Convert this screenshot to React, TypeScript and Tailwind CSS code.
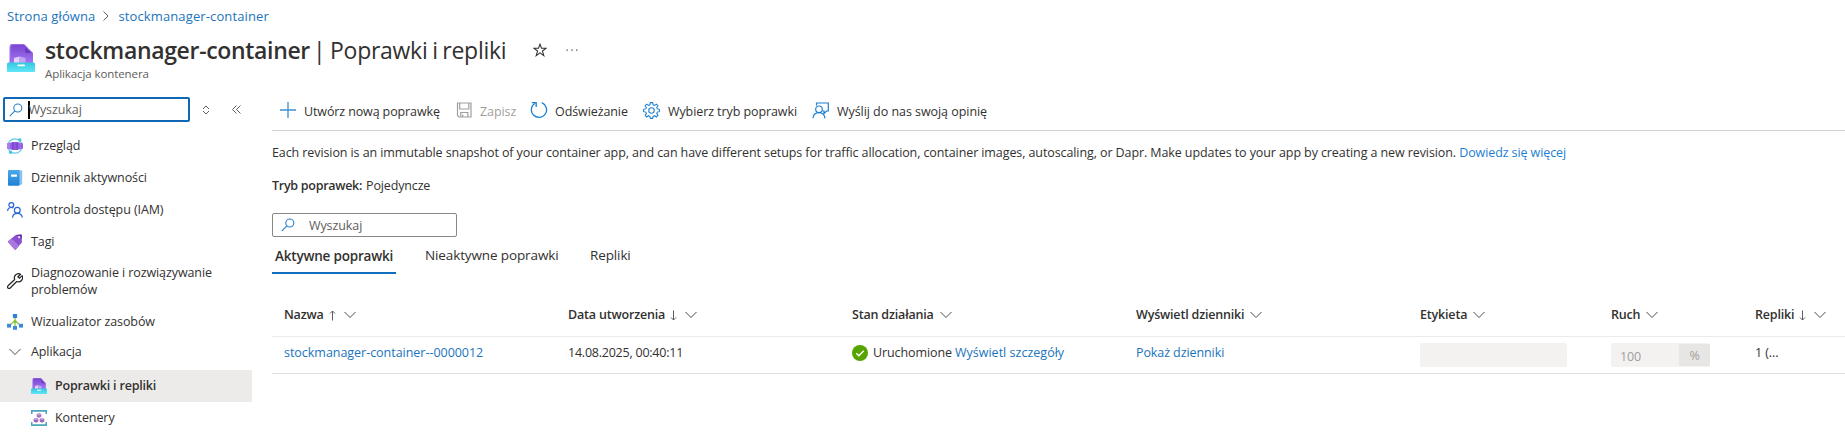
import React from 'react';

type IconProps = { className?: string };

const Chevron = ({ className = '' }: IconProps) => (
  <svg className={`shrink-0 ${className}`} width="12" height="8" viewBox="0 0 12 8" fill="none" stroke="#4b4a48" strokeWidth="1">
    <path d="M.5 1 6 6.5 11.5 1" />
  </svg>
);

const Arrow = ({ up }: { up?: boolean }) => (
  <svg className="shrink-0" width="7" height="11" viewBox="0 0 7 11" fill="none" stroke="#605e5c" strokeWidth="1">
    <path d={up ? 'M3.500 10.500V1M1 3.500 3.500 1 6 3.500' : 'M3.500.5V10M1 7.500 3.500 10 6 7.500'} />
  </svg>
);

const SearchIcon = () => (
  <svg className="shrink-0" width="14" height="14" viewBox="0 0 14 14" fill="none" stroke="#2b80c9" strokeWidth="1.1">
    <circle cx="8.8" cy="5" r="4" />
    <path d="M5.9 7.9.7 13.1" />
  </svg>
);

const RevisionIcon = ({ className = '' }: IconProps) => (
  <svg className={`shrink-0 ${className}`} viewBox="0 0 28 28">
    <defs>
      <linearGradient id="doc" x1="0" y1="0" x2="0" y2="1">
        <stop offset="0" stopColor="#7a45d2" />
        <stop offset="1" stopColor="#a67af4" />
      </linearGradient>
      <linearGradient id="tray" x1="0" y1="0" x2="0" y2="1">
        <stop offset="0" stopColor="#35c8de" />
        <stop offset="1" stopColor="#5fe6f7" />
      </linearGradient>
    </defs>
    <path d="M3 1.500Q3 0 4.500 0H17L21 4V20H2.500V3Z" fill="#9a6cec" />
    <path d="M6 1H17.500L26 9V20H4V3Q4 1 6 1Z" fill="url(#doc)" />
    <path d="M18 3V7.500Q18 9 19.500 9H24.500Z" fill="#6a3cbc" />
    <path d="M17.800 1.200 26 9.300" stroke="#b08cf2" strokeWidth=".8" />
    <path d="M7 14 12.500 12.500V19.500H7Z" fill="#e2d2fb" />
    <path d="M12.500 12.500 18.500 14V19.500H12.500Z" fill="#c3a5f4" />
    <path d="M1.500 18.500H26.500Q28 18.500 28 20V27Q28 28 27 28H1Q0 28 0 27V20Q0 18.500 1.500 18.500Z" fill="url(#tray)" />
    <rect x="10.500" y="20.500" width="7.500" height="1.800" rx=".9" fill="#fff" />
  </svg>
);

const OverviewIcon = () => (
  <svg width="16" height="16" viewBox="0 0 16 16">
    <circle cx="8" cy="8" r="7.200" fill="none" stroke="#5cc8e8" strokeWidth="1.200" />
    <path d="M0 5.500 5 4.200H11L16 5.500V10.500L11 11.800H5L0 10.500Z" fill="#9560e4" />
    <path d="M5 4.200H11V11.800H5Z" fill="#7f4bd2" />
    <path d="M0 5.500 3 4.700V11.300L0 10.500Z" fill="#ac7df0" />
    <path d="M8 4.200V11.800M13 4.700V11.300" stroke="#a57aec" strokeWidth=".6" />
    <circle cx="12.800" cy="2" r="1.700" fill="#45c5e5" />
    <circle cx="3.600" cy="14.200" r="1.700" fill="#45c5e5" />
  </svg>
);

const LogIcon = () => (
  <svg width="16" height="16" viewBox="0 0 16 16">
    <defs>
      <linearGradient id="book" x1="0" y1="0" x2="0" y2="1">
        <stop offset="0" stopColor="#4aa8ea" />
        <stop offset="1" stopColor="#1f80d6" />
      </linearGradient>
    </defs>
    <rect x="2" y=".3" width="13.200" height="14.500" rx="1" fill="#8cc3ee" />
    <path d="M2 0H12.500V15.700H2Q1 15.700 1 14.700V1Q1 0 2 0Z" fill="url(#book)" />
    <rect x="4" y="4.500" width="6" height="2.200" rx=".4" fill="#fff" />
  </svg>
);

const PeopleIcon = () => (
  <svg width="16" height="16" viewBox="0 0 16 16" fill="none" stroke="#2465d8" strokeWidth="1.200">
    <circle cx="4.300" cy="3" r="2.400" />
    <path d="M.6 9C.8 6.700 2.300 5.500 4.300 5.500 5.100 5.500 5.900 5.700 6.500 6.100" />
    <circle cx="10.300" cy="8.300" r="2.900" />
    <path d="M5.500 15.700C5.700 13 7.500 11.300 10.300 11.300S15 13 15.400 15.700" />
  </svg>
);

const TagIcon = () => (
  <svg width="16" height="16" viewBox="0 0 16 16">
    <path d="M1.400 7 8.700 1 13.800.5Q15 .5 15 1.700L14.800 8.400 8.800 15.400Q8.200 15.900 7.600 15.400L1.400 8.600Q.8 7.700 1.400 7Z" fill="#8a50cf" />
    <path d="M1.400 7 4.500 4.500 12 11.700 8.800 15.400Q8.200 15.900 7.600 15.400L1.400 8.600Q.8 7.700 1.400 7Z" fill="#a878dc" />
    <path d="M8.700 1 13.800.5Q15 .5 15 1.700L14.900 4 9 .9Z" fill="#6a34ad" />
    <circle cx="12.100" cy="3.200" r="1.100" fill="#f0e4fb" />
  </svg>
);

const WrenchIcon = () => (
  <svg width="16" height="16" viewBox="0 0 16 16" fill="none" stroke="#262524" strokeWidth="1.200" strokeLinejoin="round">
    <path d="M13.600 1.200A4.200 4.200 0 0 0 7.700 6.500L1 12.800A1.500 1.500 0 0 0 3.200 15L9.700 8.500A4.200 4.200 0 0 0 15.100 2.700L12.600 5.200 10.900 3.700Z" />
  </svg>
);

const VisualizerIcon = () => (
  <svg width="16" height="16" viewBox="0 0 16 16">
    <path d="M8 4V13M8 6.500 2.500 11.500M8 6.500 13.500 11.500" stroke="#8cc63f" strokeWidth="1.300" fill="none" />
    <circle cx="8" cy="7.500" r="1.600" fill="#86c440" />
    <rect x="5.900" y="0" width="4.200" height="4" fill="#2f7fd2" />
    <rect x="0" y="9.800" width="4" height="3.800" fill="#3c8ade" />
    <rect x="12" y="9.800" width="4" height="3.800" fill="#3c8ade" />
    <rect x="6" y="12" width="4" height="3.800" fill="#3c8ade" />
  </svg>
);

const ContainersIcon = () => (
  <svg width="16" height="16" viewBox="0 0 16 16">
    <path d="M0 0H16V4H14.500V1.800H1.500V4H0ZM0 16H16V12H14.500V14.200H1.500V12H0Z" fill="#4ba6bd" />
    <path d="M8 3 10.300 4.200V6.800L8 8 5.700 6.800V4.200Z" fill="#a86fc0" />
    <path d="M5 7.800 7.300 9V11.600L5 12.800 2.700 11.600V9Z" fill="#9a62ba" />
    <path d="M11 7.800 13.300 9V11.600L11 12.800 8.700 11.600V9Z" fill="#9a62ba" />
    <path d="M8 3 10.300 4.200 8 5.400 5.700 4.200ZM5 7.800 7.300 9 5 10.200 2.700 9ZM11 7.800 13.300 9 11 10.200 8.700 9Z" fill="#c9a0da" />
  </svg>
);

const SaveIcon = () => (
  <svg width="16" height="16" viewBox="0 0 16 16" fill="none" stroke="#a19f9d" strokeWidth="1.200">
    <path d="M1.500 1H15V15H3L1.500 13.500Z" />
    <path d="M3.700 1V7H12.800V1M4.700 15V10.500H11.800V15M6.700 12.500V15" />
  </svg>
);

const RefreshIcon = () => (
  <svg width="18" height="18" viewBox="0 0 18 18" fill="none" stroke="#1d7fd0" strokeWidth="1.300">
    <path d="M11.700 1.700A7.600 7.600 0 1 1 5 2.300" />
    <path d="M1.800 1.700H6.200V6" />
  </svg>
);

const GEAR =
  'M6.900.6H9.100L9.500 2.600 10.900 3.200 12.600 2 14.100 3.500 12.900 5.200 13.500 6.500 15.400 6.900V9.100L13.500 9.500 12.900 10.900 14.100 12.500 12.600 14.100 10.900 12.900 9.500 13.500 9.100 15.400H6.900L6.500 13.500 5.200 12.900 3.500 14.100 2 12.500 3.200 10.900 2.600 9.500.6 9.100V6.900L2.600 6.500 3.200 5.200 2 3.500 3.500 2 5.200 3.200 6.500 2.600Z';

const GearIcon = () => (
  <svg width="17" height="17" viewBox="0 0 16 16" fill="none" stroke="#1d7fd0" strokeWidth="1">
    <path d={GEAR} />
    <circle cx="8" cy="8" r="2.600" />
  </svg>
);

const FeedbackIcon = () => (
  <svg width="17" height="17" viewBox="0 0 17 17" fill="none" stroke="#1d7fd0" strokeWidth="1.200">
    <path d="M4.500 3.500V1H16.300V9H14.500L12 11.500V9H11" />
    <circle cx="7" cy="7.300" r="3.300" />
    <path d="M1 16.300C1.300 12.800 3.800 10.700 7 10.700S12.500 12.800 13 16.300" />
  </svg>
);

const PlusIcon = () => (
  <svg width="16" height="16" viewBox="0 0 16 16" fill="none" stroke="#3b8fd0" strokeWidth="1.300">
    <path d="M8 0V16M0 8H16" />
  </svg>
);

const navItems = [
  { label: 'Przegląd', icon: <OverviewIcon /> },
  { label: 'Dziennik aktywności', icon: <LogIcon /> },
  { label: 'Kontrola dostępu (IAM)', icon: <PeopleIcon /> },
  { label: 'Tagi', icon: <TagIcon /> },
];

function Sidebar() {
  return (
    <nav className="flex w-[252px] shrink-0 flex-col">
      <div className="flex h-[25px] items-center">
        <div className="ml-[3px] flex h-[25px] w-[187px] items-center rounded-[2px] border-2 border-[#1068b4] pl-1">
          <SearchIcon />
          <span className="ml-[5px] h-[18px] w-[1.500px] bg-black" />
          <span className="-ml-px text-[#605e5c]">Wyszukaj</span>
        </div>
        <svg className="ml-[12px]" width="8" height="10" viewBox="0 0 8 10" fill="none" stroke="#605e5c">
          <path d="M1 4 4 1 7 4M1 6 4 9 7 6" />
        </svg>
        <svg className="ml-[22px]" width="9" height="9" viewBox="0 0 9 9" fill="none" stroke="#605e5c">
          <path d="M4.500.5.500 4.500 4.500 8.500M8.500.5 4.500 4.500 8.500 8.500" />
        </svg>
      </div>
      <ul className="mt-[8px]">
        {navItems.map((item) => (
          <li key={item.label} className="flex h-8 items-center gap-2 pl-[7px]">
            {item.icon}
            <span>{item.label}</span>
          </li>
        ))}
        <li className="flex h-12 items-center gap-2 pb-[2px] pl-[7px] leading-[17px]">
          <WrenchIcon />
          <span className="w-[200px]">Diagnozowanie i rozwiązywanie problemów</span>
        </li>
        <li className="flex h-8 items-center gap-2 pl-[7px]">
          <VisualizerIcon />
          <span>Wizualizator zasobów</span>
        </li>
        <li className="flex h-8 items-center gap-2.5 pb-[4px] pl-[9px]">
          <Chevron />
          <span>Aplikacja</span>
        </li>
        <li className="flex h-8 items-center gap-2 bg-[#edebe9] pl-[31px]">
          <RevisionIcon className="size-4" />
          <span className="font-semibold tracking-[-0.190px]">Poprawki i repliki</span>
        </li>
        <li className="flex h-8 items-center gap-2 pl-[31px]">
          <ContainersIcon />
          <span>Kontenery</span>
        </li>
      </ul>
    </nav>
  );
}

function Toolbar() {
  return (
    <div className="flex h-[34px] items-start border-b border-[#d2d0ce] pl-2 pt-[4px]">
      <div className="flex h-[18px] w-[176px] items-center gap-2">
        <PlusIcon />
        <span className="whitespace-nowrap pt-[4px] tracking-[-0.120px]">Utwórz nową poprawkę</span>
      </div>
      <div className="flex h-[18px] w-[74px] items-center gap-2 text-[#a19f9d]">
        <SaveIcon />
        <span className="pt-[4px]">Zapisz</span>
      </div>
      <div className="flex h-[18px] w-[113px] items-center gap-[7px]">
        <RefreshIcon />
        <span className="pt-[4px]">Odświeżanie</span>
      </div>
      <div className="flex h-[18px] w-[169px] items-center gap-2">
        <GearIcon />
        <span className="whitespace-nowrap pt-[4px]">Wybierz tryb poprawki</span>
      </div>
      <div className="flex h-[18px] items-center gap-2">
        <FeedbackIcon />
        <span className="whitespace-nowrap pt-[4px] tracking-[-0.050px]">Wyślij do nas swoją opinię</span>
      </div>
    </div>
  );
}

const columns: { label: string; sort?: 'up' | 'down' }[] = [
  { label: 'Nazwa', sort: 'up' },
  { label: 'Data utworzenia', sort: 'down' },
  { label: 'Stan działania' },
  { label: 'Wyświetl dzienniki' },
  { label: 'Etykieta' },
  { label: 'Ruch' },
  { label: 'Repliki', sort: 'down' },
];

const GRID = 'grid grid-cols-[284px_284px_284px_284px_191px_144px_90px] pl-3';

function RevisionsTable() {
  return (
    <div className="mt-[18px]">
      <div className={`${GRID} h-[45px] items-center border-b border-[#edebe9] pt-[2px]`}>
        {columns.map((c) => (
          <div key={c.label} className="flex items-center">
            <span className="font-semibold tracking-[-0.180px]">{c.label}</span>
            {c.sort && (
              <span className="ml-[5px]">
                <Arrow up={c.sort === 'up'} />
              </span>
            )}
            <Chevron className={c.sort ? 'ml-[8px]' : 'ml-[6px]'} />
          </div>
        ))}
      </div>
      <div className={`${GRID} h-[37px] border-b border-[#e1dfdd] leading-[18px]`}>
        <span className="pt-[7px] tracking-[-0.030px] text-[#1a74bd]">stockmanager-container--0000012</span>
        <span className="pt-[7px] tracking-[-0.230px]">14.08.2025, 00:40:11</span>
        <div className="flex items-start pt-[7px]">
          <svg className="mt-[1px] shrink-0" width="16" height="16" viewBox="0 0 16 16">
            <circle cx="8" cy="8" r="8" fill="#57a300" />
            <path d="m4.300 8.200 2.500 2.500 5-5" fill="none" stroke="#fff" strokeWidth="1.500" />
          </svg>
          <span className="ml-[5px] tracking-[-0.100px]">Uruchomione</span>
          <span className="ml-[3px] tracking-[0.020px] text-[#1a74bd]">Wyświetl szczegóły</span>
        </div>
        <span className="pt-[7px] text-[#1a74bd]">Pokaż dzienniki</span>
        <div className="mt-[6px] h-6 w-[147px] rounded-[2px] bg-[#f3f2f1]" />
        <div className="mt-[6px] flex h-6 w-[99px] items-center justify-between rounded-[2px] bg-[#f3f2f1] pl-[9px] text-[#a19f9d]">
          <span className="pt-[3px] tracking-[-0.200px]">100</span>
          <span className="flex h-[22px] w-[31px] items-center justify-center bg-[#e8e6e4] pt-px">%</span>
        </div>
        <span className="pt-[7px]">1 (...</span>
      </div>
    </div>
  );
}

export default function App() {
  return (
    <div className="h-[433px] overflow-hidden bg-white font-['Open_Sans','Noto_Sans',sans-serif] text-[12.500px] leading-[18px] tracking-[-0.090px] text-[#323130]">
      <div className="flex h-8 items-center pl-[7px] text-[13px] tracking-[0.120px] text-[#1a74bd]">
        <span>Strona główna</span>
        <svg className="ml-[8px] mr-[9px]" width="6" height="10" viewBox="0 0 6 10" fill="none" stroke="#605e5c">
          <path d="M.5.5 5 5 .5 9.500" />
        </svg>
        <span>stockmanager-container</span>
      </div>
      <header className="flex h-[65px] pl-[7px]">
        <RevisionIcon className="mt-[12px] size-7" />
        <div className="ml-[10px]">
          <div className="flex h-[34px] items-center whitespace-nowrap pt-px text-[23px]">
            <h1 className="w-[268px] whitespace-nowrap">
              <span className="font-semibold tracking-[-0.330px]">stockmanager-container</span>
            </h1>
            <span className="w-[196px] tracking-[-0.280px] [word-spacing:-1px]">| Poprawki i repliki</span>
            <svg className="ml-[24px]" width="14" height="14" viewBox="0 0 14 14" fill="none" stroke="#323130" strokeWidth="1.050">
              <path d="M7 1.200 8.500 5.300H13L9.400 8 10.800 12.600 7 9.800 3.200 12.600 4.600 8 1 5.300H5.500Z" />
            </svg>
            <svg className="ml-[19px]" width="12" height="2" viewBox="0 0 12 2" fill="#484644">
              <path d="M.5.5h1.300v1.200H.5ZM5.300.5h1.300v1.200H5.300ZM10.100.5h1.300v1.200h-1.300Z" />
            </svg>
          </div>
          <div className="text-[11.500px] leading-4 text-[#605e5c]">Aplikacja kontenera</div>
        </div>
      </header>
      <div className="flex">
        <Sidebar />
        <main className="ml-5 flex-1">
          <Toolbar />
          <p className="mt-[13px] whitespace-nowrap tracking-[-0.094px]">
            Each revision is an immutable snapshot of your container app, and can have different setups for traffic
            allocation, container images, autoscaling, or Dapr. Make updates to your app by creating a new revision.{' '}
            <span className="text-[#1c80d4]">Dowiedz się więcej</span>
          </p>
          <p className="mt-[15px]">
            <span className="font-semibold tracking-[-0.280px]">Tryb poprawek:</span>
            <span className="ml-[4px] tracking-[-0.150px]">Pojedyncze</span>
          </p>
          <div className="mt-[18px] flex h-6 w-[185px] items-center rounded-[2px] border border-[#8a8886] pl-2">
            <SearchIcon />
            <span className="ml-[14px] pt-px text-[#605e5c]">Wyszukaj</span>
          </div>
          <div className="flex h-[37px] items-start text-[13.500px] tracking-[-0.120px]">
            <div className="h-[37px] w-[124px] whitespace-nowrap border-b-2 border-[#106ebe] pl-[3px] pt-[10px] font-semibold tracking-[-0.200px]">
              Aktywne poprawki
            </div>
            <div className="ml-[29px] w-[134px] whitespace-nowrap pt-[9px]">Nieaktywne poprawki</div>
            <div className="ml-[31px] pt-[9px]">Repliki</div>
          </div>
          <RevisionsTable />
        </main>
      </div>
    </div>
  );
}
